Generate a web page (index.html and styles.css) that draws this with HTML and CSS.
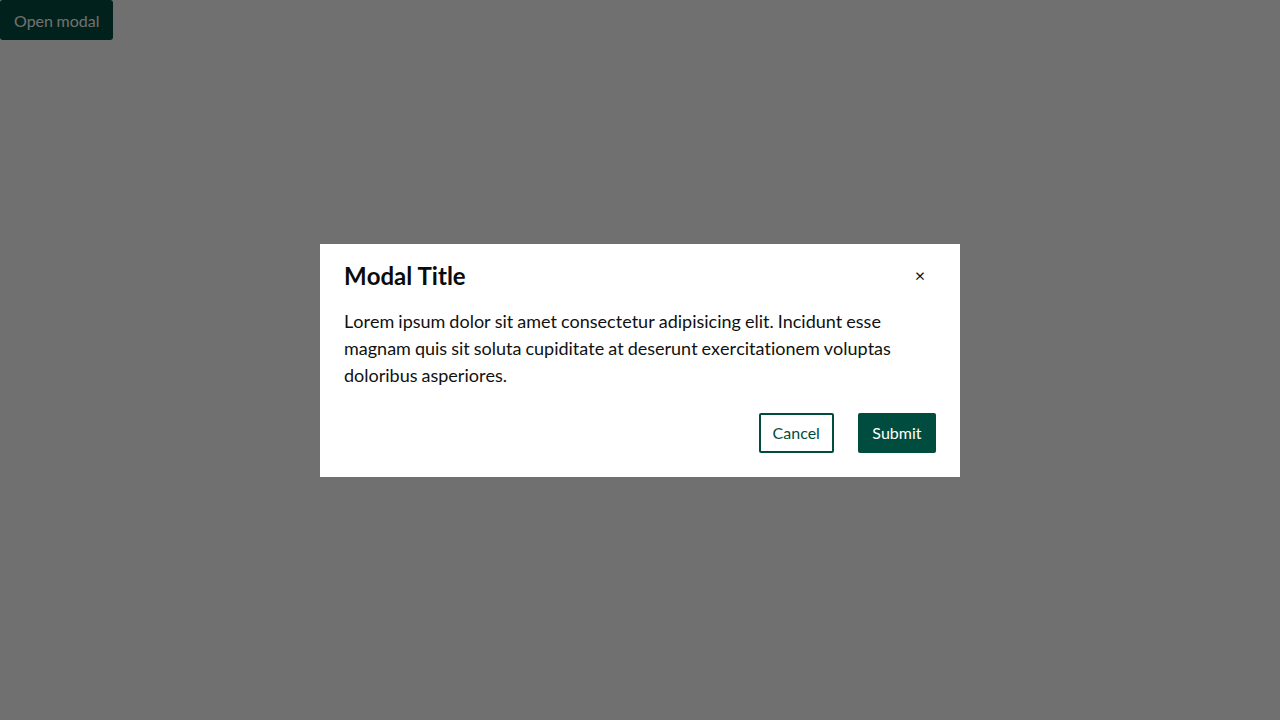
FILE: index.html
```html
<!DOCTYPE html>
<html lang="en">
<head>
<meta charset="utf-8">
<title>Modal</title>
<link rel="stylesheet" href="styles.css">
</head>
<body>
<button class="open-btn" type="button">Open modal</button>
<div class="overlay">
  <div class="modal" role="dialog" aria-labelledby="modal-title">
    <div class="modal-header">
      <h2 class="modal-title" id="modal-title">Modal Title</h2>
      <button class="close-btn" type="button" aria-label="Close">×</button>
    </div>
    <p class="modal-body">Lorem ipsum dolor sit amet consectetur adipisicing elit. Incidunt esse magnam quis sit soluta cupiditate at deserunt exercitationem voluptas doloribus asperiores.</p>
    <div class="modal-footer">
      <button class="btn btn-outline" type="button">Cancel</button>
      <button class="btn btn-primary" type="button">Submit</button>
    </div>
  </div>
</div>
</body>
</html>
```
FILE: styles.css
```css
* { box-sizing: border-box; }
html, body {
  margin: 0;
  height: 100%;
}
body {
  font-family: Lato, "Open Sans", sans-serif;
  background: #ffffff;
  color: #111;
  font-variant-ligatures: none;
  font-kerning: none;
  word-spacing: -0.6px;
}
.open-btn {
  font-family: inherit;
  font-size: 16px;
  word-spacing: -0.6px;
  height: 40px;
  padding: 0 14px;
  background: #004d40;
  color: #ffffff;
  border: none;
  border-radius: 3px;
  cursor: pointer;
}
.overlay {
  position: fixed;
  inset: 0;
  background: rgba(0, 0, 0, 0.56);
  display: flex;
  align-items: center;
  justify-content: center;
}
.modal {
  width: 640px;
  background: #ffffff;
  padding: 16px 24px 24px;
}
.modal-header {
  display: flex;
  align-items: center;
  justify-content: space-between;
  height: 32px;
  margin-bottom: 16px;
}
.modal-title {
  margin: 2px 0 0;
  font-size: 24px;
  font-weight: 700;
  line-height: 1.2;
  color: #0b0b0b;
}
.close-btn {
  width: 32px;
  height: 32px;
  padding: 0 0 2px;
  border: none;
  background: transparent;
  font-family: inherit;
  font-size: 18px;
  line-height: 1;
  color: #111;
  cursor: pointer;
}
.modal-body {
  margin: 0 0 24px;
  font-size: 18px;
  line-height: 27px;
  color: #111;
}
.modal-footer {
  display: flex;
  justify-content: flex-end;
  gap: 24px;
}
.btn {
  height: 40px;
  padding: 0 12px;
  font-family: inherit;
  font-size: 16px;
  border: 2px solid #004d40;
  border-radius: 2px;
  cursor: pointer;
}
.btn-outline {
  background: #ffffff;
  color: #004d40;
}
.btn-primary {
  background: #004d40;
  color: #ffffff;
  padding: 0 12.5px;
}
```
